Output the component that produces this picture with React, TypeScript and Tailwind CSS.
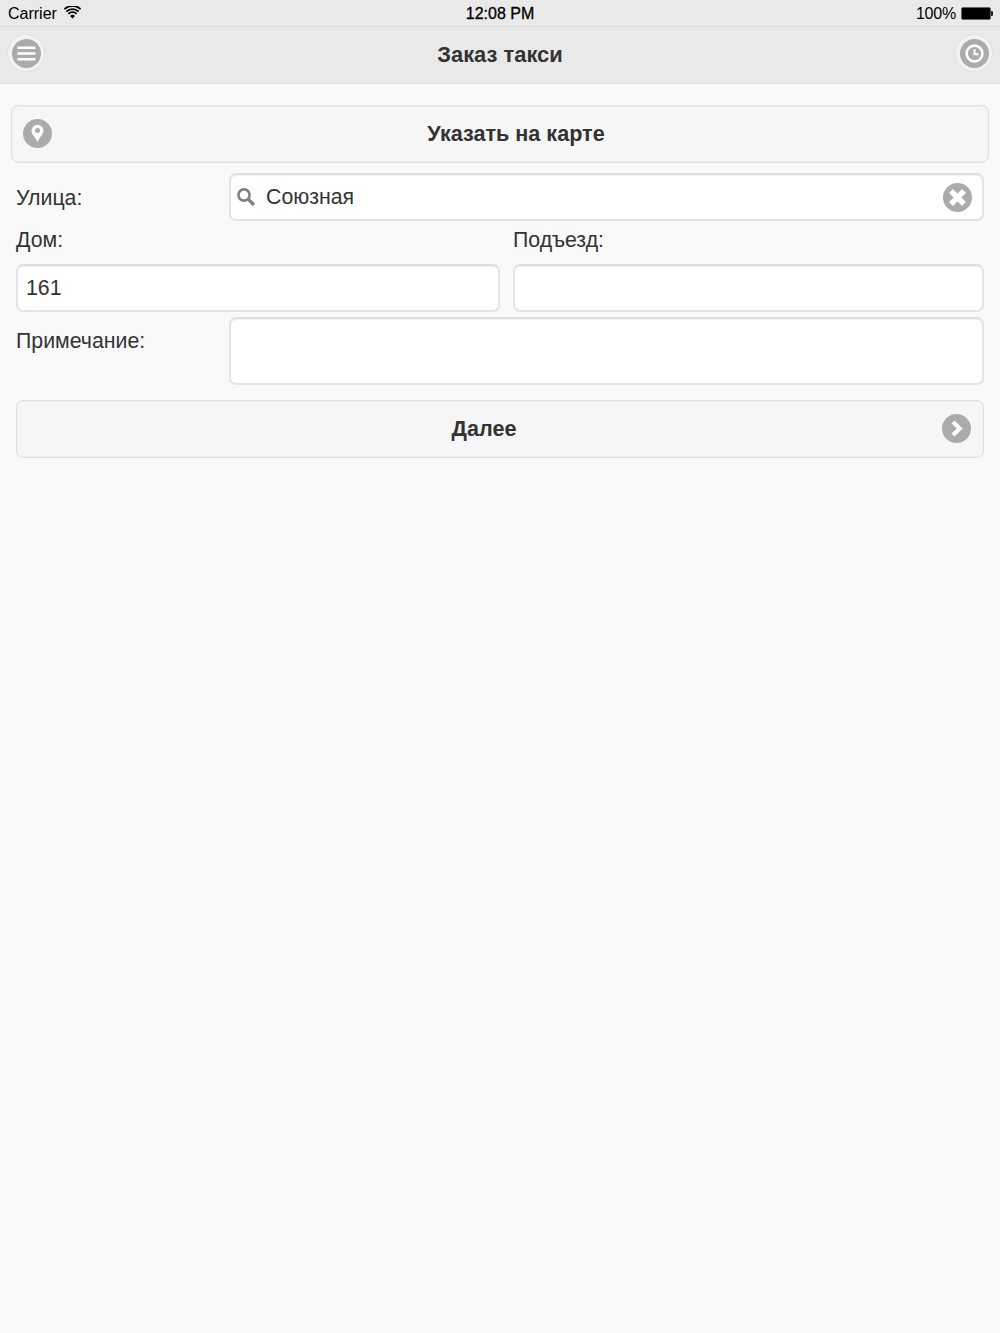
import React from "react";

function Wifi() {
  return (
    <svg width="17" height="13" viewBox="0 0 16 12" className="block">
      <path d="M8 11.7 5.7 9.2a3.2 3.2 0 0 1 4.6 0Z" fill="#000" />
      <path d="M4.1 7.3a5.6 5.6 0 0 1 7.8 0M2.2 5.1a8.3 8.3 0 0 1 11.6 0M.4 2.9a11 11 0 0 1 15.2 0" fill="none" stroke="#000" strokeWidth="1.7" />
    </svg>
  );
}

function Battery() {
  return (
    <div className="flex items-center">
      <div className="w-[30px] h-[13px] rounded-[2px] border border-[#666] bg-black" />
      <div className="w-[2px] h-[5px] bg-[#222] rounded-r-[1px]" />
    </div>
  );
}

function HeaderButton({ children }: { children: React.ReactNode }) {
  return (
    <div className="w-[38px] h-[38px] rounded-full bg-[#f3f3f3] border border-[#e2e2e2] flex items-center justify-center">
      {children}
    </div>
  );
}

function Circle({ children, size = 29 }: { children?: React.ReactNode; size?: number }) {
  return (
    <svg width={size} height={size} viewBox="0 0 29 29" className="block shrink-0">
      <circle cx="14.5" cy="14.5" r="14.5" fill="#ababab" />
      {children}
    </svg>
  );
}

function Field({ className, children }: { className?: string; children?: React.ReactNode }) {
  return (
    <div className={`bg-white border-2 border-[#e4e4e4] border-t-[#dedede] rounded-[7px] shadow-[inset_0_1px_1px_#efefef] flex items-center text-[21.3px] text-[#333] ${className ?? ""}`}>
      {children}
    </div>
  );
}

export default function App() {
  return (
    <div className="w-[1000px] min-h-[1333px] bg-[#f9f9f9] text-[#333] font-['Liberation_Sans','Helvetica',sans-serif]">
      <div className="h-[27px] bg-[#e9e9e9] border-b border-[#dddddd] relative flex items-center justify-between pl-[8px] pr-[7px] text-black">
        <div className="flex items-center gap-[7px] text-[16px] leading-none pt-[1px]">
          <span>Carrier</span>
          <span className="pb-[3px]"><Wifi /></span>
        </div>
        <span className="absolute left-0 right-0 text-center text-[16px] leading-none pt-[1px] [-webkit-text-stroke:0.3px_black]">12:08 PM</span>
        <div className="flex items-center gap-[5px] text-[16px] leading-none pt-[1px]">
          <span className="tracking-[-0.2px]">100%</span>
          <Battery />
        </div>
      </div>

      <div className="h-[57px] bg-[#e9e9e9] border-b border-[#dddddd] relative flex items-center justify-between pl-[7px] pr-[7px] pb-[4px]">
        <HeaderButton>
          <Circle>
            <path d="M5.4 8.8h18M5.4 14.5h18M5.4 20.2h18" stroke="#fff" strokeWidth="2.6" fill="none" />
          </Circle>
        </HeaderButton>
        <span className="absolute left-0 right-0 top-[15px] text-center text-[21.9px] leading-[26px] font-bold text-[#333]">Заказ такси</span>
        <HeaderButton>
          <Circle>
            <circle cx="14.5" cy="14.5" r="7.9" fill="none" stroke="#fff" strokeWidth="2.6" />
            <path d="M14.5 10.2v5h4" fill="none" stroke="#fff" strokeWidth="2" />
          </Circle>
        </HeaderButton>
      </div>

      <div className="pt-[21px] px-[11px]">
        <div className="h-[58px] bg-[#f6f6f6] border border-[#dfdfdf] shadow-[0_0_0_1px_#f0f0f0_inset] rounded-[7px] relative flex items-center justify-center pl-[32px]">
          <div className="absolute left-[11px] top-[13px]">
            <Circle>
              <path d="M14.5 5.8a6 6 0 0 0-6 6c0 3.6 4 6.5 6 11 2-4.5 6-7.4 6-11a6 6 0 0 0-6-6Z" fill="#fff" />
              <circle cx="14.5" cy="11.4" r="2.5" fill="#ababab" />
            </Circle>
          </div>
          <span className="text-[21.6px] font-bold text-[#333]">Указать на карте</span>
        </div>

        <div className="px-[5px]">
          <div className="mt-[10px] flex">
            <label className="w-[213px] text-[21.3px] leading-[50px] text-[#333]">Улица:</label>
            <Field className="flex-1 h-[48px] relative pl-[35px] pt-[2px]">
              <svg width="20" height="20" viewBox="0 0 20 20" className="absolute left-[5px] top-[12px]">
                <circle cx="8" cy="8" r="5.6" fill="none" stroke="#808080" strokeWidth="2.6" />
                <path d="M12.2 12.2 18 18" stroke="#808080" strokeWidth="3.2" />
              </svg>
              <span>Союзная</span>
              <div className="absolute right-[10px] top-[8px]">
                <Circle>
                  <path d="M8 8l13 13M21 8 8 21" stroke="#fff" strokeWidth="5.4" strokeLinecap="butt" />
                </Circle>
              </div>
            </Field>
          </div>

          <div className="mt-[5px] grid grid-cols-[484px_471px] gap-x-[13px]">
            <div>
              <div className="text-[21.3px] leading-[24px] mb-[12px] text-[#333]">Дом:</div>
              <Field className="h-[48px] pl-[8px] pt-[2px]">161</Field>
            </div>
            <div>
              <div className="text-[21.3px] leading-[24px] mb-[12px] text-[#333]">Подъезд:</div>
              <Field className="h-[48px]" />
            </div>
          </div>

          <div className="mt-[5px] flex">
            <label className="w-[213px] text-[21.3px] leading-[48px] text-[#333]">Примечание:</label>
            <Field className="flex-1 h-[68px]" />
          </div>

          <div className="mt-[15px] h-[58px] bg-[#f6f6f6] border border-[#dfdfdf] shadow-[0_0_0_1px_#f0f0f0_inset] rounded-[7px] relative flex items-center justify-center pr-[32px]">
            <span className="text-[21.6px] font-bold text-[#333]">Далее</span>
            <div className="absolute right-[12px] top-[13px]">
              <Circle>
                <path d="M11 8l6.8 6.5L11 21" fill="none" stroke="#fff" strokeWidth="4" />
              </Circle>
            </div>
          </div>
        </div>
      </div>
    </div>
  );
}
